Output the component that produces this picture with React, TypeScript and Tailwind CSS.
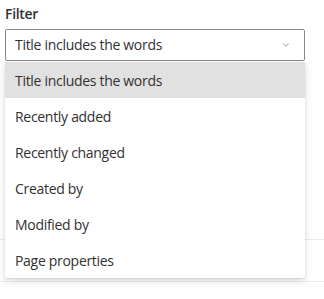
import { ChevronDown } from 'lucide-react';

const options = [
  'Title includes the words',
  'Recently added',
  'Recently changed',
  'Created by',
  'Modified by',
  'Page properties',
];

export default function App() {
  return (
    <div
      className="relative w-[324px] h-[299px] bg-white overflow-hidden text-[#323130] tracking-[-0.3px]"
      style={{ fontFamily: '"Open Sans", "Noto Sans", sans-serif' }}
    >
      {/* Field */}
      <div className="pl-[5px] pt-[4px]">
        <label className="block text-[14px] font-semibold leading-[20px] pb-[5px]">Filter</label>
        <div className="flex items-center justify-between w-[300px] h-[32px] border border-[#8a8886] rounded-[2px] pl-[9px] pr-[13px]">
          <span className="text-[14px] leading-[20px]">Title includes the words</span>
          <ChevronDown className="w-[10px] h-[10px] text-[#605e5c]" strokeWidth={1.5} />
        </div>
      </div>

      {/* Underlying dividers */}
      <div className="mt-[178px] h-px bg-[#edebe9]" />
      <div className="mt-[41px] h-px bg-[#edebe9]" />

      {/* Open menu */}
      <div className="absolute left-[5px] top-[62px] w-[300px] bg-white rounded-b-[2px] shadow-[0_3px_8px_rgba(0,0,0,0.13),0_1px_2px_rgba(0,0,0,0.1)]">
        {options.map((o, i) => (
          <div
            key={o}
            className={`flex items-center h-[36px] px-[10px] text-[14px] ${i === 0 ? 'bg-[#e1e1e1]' : ''}`}
          >
            {o}
          </div>
        ))}
      </div>
    </div>
  );
}
